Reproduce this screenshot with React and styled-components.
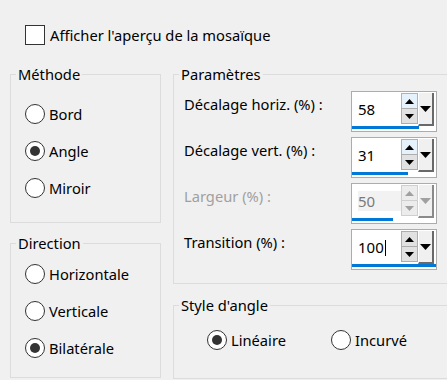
import React from 'react';
import styled, { createGlobalStyle } from 'styled-components';

const GlobalStyle = createGlobalStyle`
  html, body {
    margin: 0;
    padding: 0;
    background: #f0f0f0;
  }
  body {
    font-family: "Noto Sans", "Open Sans", sans-serif;
    font-size: 14.7px;
    color: #000;
  }
`;

const Page = styled.div`
  width: 447px;
  height: 380px;
  overflow: hidden;
  padding-top: 25px;
  box-sizing: border-box;
`;

const CheckRow = styled.label`
  display: flex;
  align-items: center;
  gap: 5px;
  height: 20px;
  margin-left: 25px;
  line-height: 20px;
`;

const CheckBox = styled.span`
  width: 20px;
  height: 20px;
  box-sizing: border-box;
  border: 1.5px solid #333;
  background: #fff;
`;

const Columns = styled.div`
  display: flex;
  gap: 12px;
  margin-top: 19px;
  margin-left: 10px;
`;

const Column = styled.div`
  display: flex;
  flex-direction: column;
  flex: none;
  width: ${props => props.width}px;
`;

const Group = styled.fieldset`
  margin: ${props => props.gap || 0}px 0 0 0;
  padding: 0;
  min-width: 0;
  border: 1px solid #dcdcdc;
`;

const Legend = styled.legend`
  margin-left: 5px;
  padding: 0 2px;
  line-height: 20px;
`;

const Body = styled.div`
  display: flex;
  flex-direction: ${props => props.row ? 'row' : 'column'};
  gap: ${props => props.spacing || 0}px;
  padding: ${props => props.pad};
`;

const RadioRow = styled.div`
  display: flex;
  align-items: center;
  gap: 4px;
  height: 20px;
  line-height: 20px;
  width: ${props => props.width ? props.width + 'px' : 'auto'};
`;

const RadioCircle = styled.span`
  width: 20px;
  height: 20px;
  box-sizing: border-box;
  border: 1.5px solid #333;
  border-radius: 50%;
  background: #fff;
  display: flex;
  align-items: center;
  justify-content: center;

  &::after {
    content: '';
    width: 10px;
    height: 10px;
    border-radius: 50%;
    background: ${props => props.checked ? '#333' : 'transparent'};
  }
`;

const ParamGrid = styled.div`
  display: grid;
  grid-template-columns: 167px 86px;
  row-gap: 5px;
  padding: 7px 0 13px 10px;
`;

const ParamLabel = styled.div`
  padding-top: 3px;
  line-height: 20px;
  color: ${props => props.disabled ? '#a0a0a0' : '#000'};
`;

const SpinBox = styled.div`
  width: 86px;
  height: 41px;
  box-sizing: border-box;
  border: 1px solid #acacac;
  background: #fff;
  display: flex;
  flex-direction: column;
`;

const SpinTop = styled.div`
  display: flex;
  height: 34px;
`;

const Field = styled.div`
  width: 49px;
  padding-left: 6px;
  box-sizing: border-box;
  display: flex;
  align-items: center;
  line-height: 20px;
  font-size: 15px;
  color: ${props => props.disabled ? '#7a7a7a' : '#000'};

  & > span {
    background: ${props => props.disabled ? '#f2f2f2' : 'transparent'};
    flex: 1;
  }
`;

const Caret = styled.i`
  display: inline-block;
  width: 1px;
  height: 16px;
  margin-left: 1px;
  background: #000;
  vertical-align: -3px;
`;

const Steppers = styled.div`
  display: flex;
  flex-direction: column;
  width: 17px;
  padding-top: 1px;
`;

const Step = styled.div`
  height: 16px;
  box-sizing: border-box;
  display: flex;
  align-items: center;
  justify-content: center;
  border: 1px solid ${props => props.hot ? '#88bcea' : props.disabled ? '#cfcfcf' : '#adadad'};
  background: ${props => props.hot ? '#e5f1fb' : props.disabled ? '#ececec' : '#e1e1e1'};
  & + & {
    margin-top: -1px;
  }
`;

const DropButton = styled.div`
  width: 16px;
  height: 33px;
  margin-top: 1px;
  box-sizing: border-box;
  display: flex;
  align-items: center;
  justify-content: center;
  background: #f0f0f0;
  border-right: 2px solid ${props => props.disabled ? '#8a8a8a' : '#696969'};
  border-bottom: 2px solid ${props => props.disabled ? '#8a8a8a' : '#696969'};
  border-left: 1px solid #fff;
`;

const Bar = styled.div`
  height: 3px;
  background: #0078d7;
`;

const Arrow = ({ up, big, color }) => {
  const w = big ? 11 : 9;
  const h = big ? 6 : 5;
  const points = up ? `0,${h} ${w / 2},0 ${w},${h}` : `0,0 ${w},0 ${w / 2},${h}`;
  return (
    <svg width={w} height={h} viewBox={`0 0 ${w} ${h}`}>
      <polygon points={points} fill={color} />
    </svg>
  );
};

const params = [
  { label: 'Décalage horiz. (%) :', value: '58', bar: 67, hot: true },
  { label: 'Décalage vert. (%) :', value: '31', bar: 56, hot: true },
  { label: 'Largeur (%) :', value: '50', bar: 41, disabled: true },
  { label: 'Transition (%) :', value: '100', bar: 84, caret: true },
];

function Radio({ label, checked, width }) {
  return (
    <RadioRow width={width}>
      <RadioCircle checked={checked} />
      <span>{label}</span>
    </RadioRow>
  );
}

function Spinner({ value, bar, hot, disabled, caret }) {
  const arrow = disabled ? '#a0a0a0' : '#000';
  return (
    <SpinBox>
      <SpinTop>
        <Field disabled={disabled}>
          <span>{value}{caret && <Caret />}</span>
        </Field>
        <Steppers>
          <Step hot={hot} disabled={disabled}><Arrow up color={arrow} /></Step>
          <Step disabled={disabled}><Arrow color={arrow} /></Step>
        </Steppers>
        <DropButton disabled={disabled}><Arrow big color={arrow} /></DropButton>
      </SpinTop>
      <Bar style={{ width: bar }} />
    </SpinBox>
  );
}

export default function App() {
  return (
    <Page>
      <GlobalStyle />
      <CheckRow>
        <CheckBox />
        <span>Afficher l'aperçu de la mosaïque</span>
      </CheckRow>
      <Columns>
        <Column width={151}>
          <Group>
            <Legend>Méthode</Legend>
            <Body spacing={17} pad="20px 0 24px 14px">
              <Radio label="Bord" />
              <Radio label="Angle" checked />
              <Radio label="Miroir" />
            </Body>
          </Group>
          <Group gap={10}>
            <Legend>Direction</Legend>
            <Body spacing={17} pad="11px 0 19px 14px">
              <Radio label="Horizontale" />
              <Radio label="Verticale" />
              <Radio label="Bilatérale" checked />
            </Body>
          </Group>
        </Column>
        <Column width={290}>
          <Group>
            <Legend>Paramètres</Legend>
            <ParamGrid>
              {params.map(p => (
                <React.Fragment key={p.label}>
                  <ParamLabel disabled={p.disabled}>{p.label}</ParamLabel>
                  <Spinner {...p} />
                </React.Fragment>
              ))}
            </ParamGrid>
          </Group>
          <Group gap={11}>
            <Legend>Style d'angle</Legend>
            <Body row pad="15px 0 28px 33px">
              <Radio label="Linéaire" checked width={124} />
              <Radio label="Incurvé" />
            </Body>
          </Group>
        </Column>
      </Columns>
    </Page>
  );
}
